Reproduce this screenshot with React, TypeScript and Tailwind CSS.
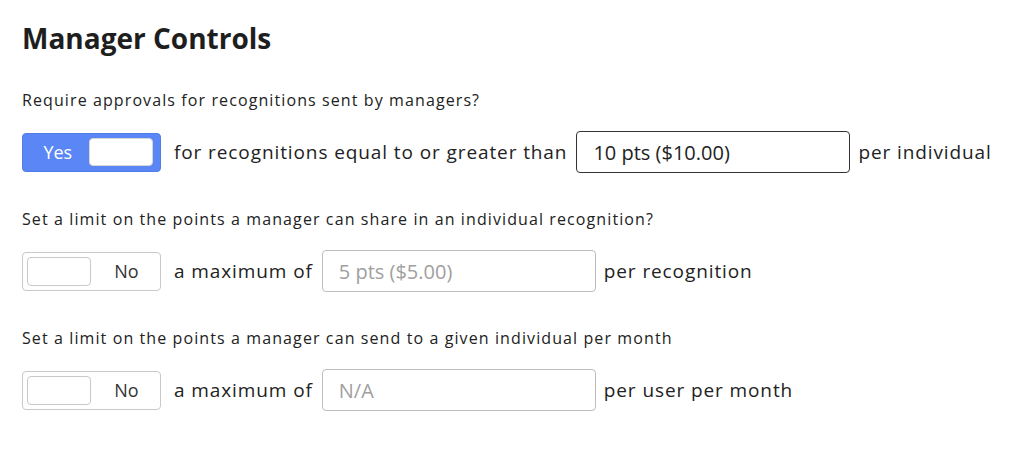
import { useState } from 'react'

type Setting = {
  question: string
  enabled: boolean
  prefix: string
  value: string
  placeholder: string
  suffix: string
}

const settings: Setting[] = [
  {
    question: 'Require approvals for recognitions sent by managers?',
    enabled: true,
    prefix: 'for recognitions equal to or greater than',
    value: '10 pts ($10.00)',
    placeholder: '',
    suffix: 'per individual'
  },
  {
    question: 'Set a limit on the points a manager can share in an individual recognition?',
    enabled: false,
    prefix: 'a maximum of',
    value: '',
    placeholder: '5 pts ($5.00)',
    suffix: 'per recognition'
  },
  {
    question: 'Set a limit on the points a manager can send to a given individual per month',
    enabled: false,
    prefix: 'a maximum of',
    value: '',
    placeholder: 'N/A',
    suffix: 'per user per month'
  }
]

function Toggle({ on, onChange }: { on: boolean; onChange: () => void }): React.JSX.Element {
  return (
    <button
      type="button"
      onClick={onChange}
      className={`flex h-[39px] w-[139px] shrink-0 items-center rounded-[4px] border px-[4px] ${
        on ? 'border-[#4f7de8] bg-[#5b87f6]' : 'border-[#c9c9c9] bg-white'
      }`}
    >
      {on ? (
        <>
          <span className="w-[62px] text-center text-[18px] text-white">Yes</span>
          <span className="ml-auto mr-[3px] h-[28px] w-[65px] rounded-[4px] border border-[#d6d6d6] bg-white" />
        </>
      ) : (
        <>
          <span className="h-[29px] w-[64px] rounded-[4px] border border-[#c9c9c9] bg-white" />
          <span className="flex-1 pl-[6px] text-center text-[18px] text-[#333]">No</span>
        </>
      )}
    </button>
  )
}

export default function App(): React.JSX.Element {
  const [enabled, setEnabled] = useState(settings.map((s) => s.enabled))

  return (
    <div
      className="min-h-[455px] bg-white pl-[22px] pt-[21px] text-[#222]"
      style={{ fontFamily: '"Open Sans", sans-serif' }}
    >
      <h1 className="text-[28px] font-bold leading-[34px] text-[#1e1e1e]">Manager Controls</h1>

      <div className="mt-[35px] flex flex-col gap-[36px]">
        {settings.map((s, i) => (
          <div key={s.question} className="flex flex-col gap-[21px]">
            <p className="text-[16px] leading-[20px] tracking-[1.1px]">{s.question}</p>
            <div className="flex h-[42px] items-center">
              <Toggle
                on={enabled[i]}
                onChange={() => setEnabled((prev) => prev.map((v, j) => (j === i ? !v : v)))}
              />
              <span className="ml-[13px] text-[19px] tracking-[0.9px]">{s.prefix}</span>
              <input
                type="text"
                readOnly
                defaultValue={s.value}
                placeholder={s.placeholder}
                className={`ml-[9px] h-[42px] w-[274px] rounded-[4px] border bg-white px-[16px] text-[20px] outline-none placeholder:text-[#a0a0a0] ${
                  s.value ? 'border-[#333] text-[#222]' : 'border-[#bdbdbd]'
                }`}
              />
              <span className="ml-[8px] text-[19px] tracking-[0.9px]">{s.suffix}</span>
            </div>
          </div>
        ))}
      </div>
    </div>
  )
}
